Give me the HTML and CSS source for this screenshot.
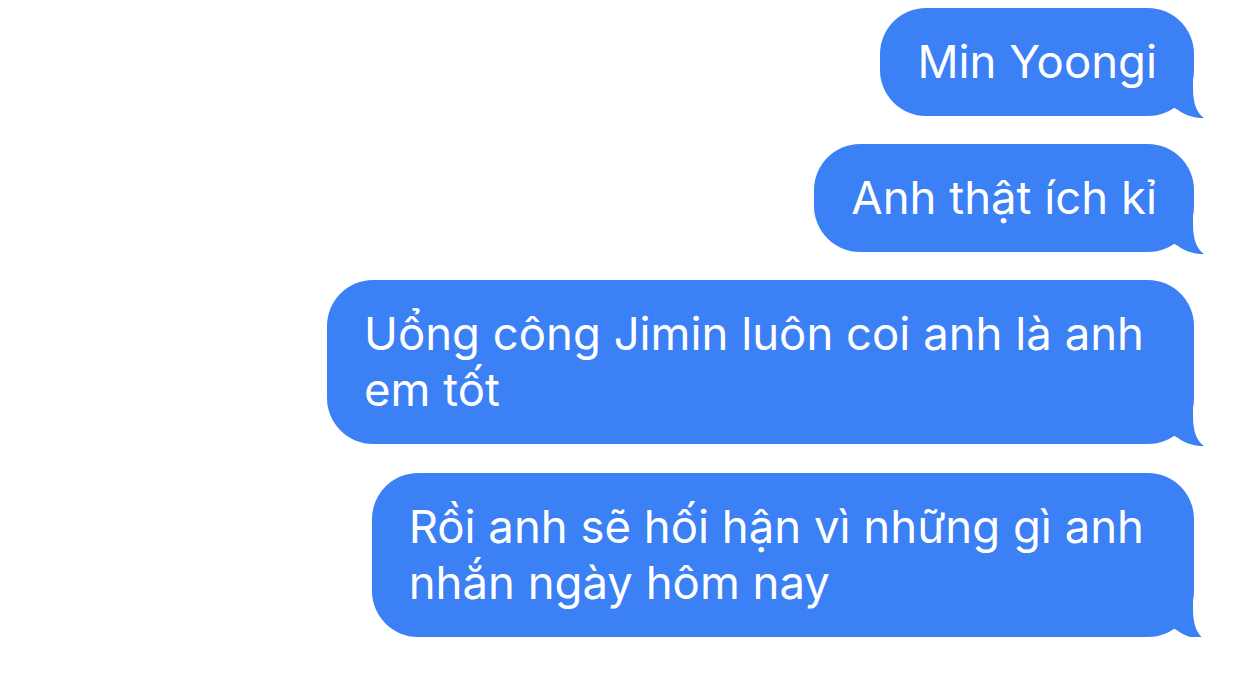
FILE: index.html
```html
<!DOCTYPE html>
<html lang="vi">
<head>
<meta charset="utf-8">
<title>Messages</title>
<link rel="stylesheet" href="styles.css">
</head>
<body>
<div class="thread">
  <div class="bubble">Min Yoongi<svg class="tail" viewBox="0 0 62 52" aria-hidden="true"><path d="M20 10 H50 V22 C50 38 54 47 61 52 C52 52 45 50 38 46 C34 43 30 41 27 40 L20 30 Z"/></svg></div>
  <div class="bubble">Anh thật ích kỉ<svg class="tail" viewBox="0 0 62 52" aria-hidden="true"><path d="M20 10 H50 V22 C50 38 54 47 61 52 C52 52 45 50 38 46 C34 43 30 41 27 40 L20 30 Z"/></svg></div>
  <div class="bubble multi">Uổng công Jimin luôn coi anh là anh<br>em tốt<svg class="tail" viewBox="0 0 62 52" aria-hidden="true"><path d="M20 10 H50 V22 C50 38 54 47 61 52 C52 52 45 50 38 46 C34 43 30 41 27 40 L20 30 Z"/></svg></div>
  <div class="bubble multi">Rồi anh sẽ hối hận vì những gì anh<br>nhắn ngày hôm nay<svg class="tail" viewBox="0 0 62 52" aria-hidden="true"><path d="M20 10 H50 V22 C50 38 54 47 61 52 C52 52 45 50 38 46 C34 43 30 41 27 40 L20 30 Z"/></svg></div>
</div>
</body>
</html>
```
FILE: styles.css
```css
html, body {
  margin: 0;
  background: #ffffff;
}
.thread {
  display: flex;
  flex-direction: column;
  align-items: flex-end;
  gap: 28px;
  padding: 8px 48px 0 0;
  font-family: Inter, "Noto Sans", "DejaVu Sans", sans-serif;
}
.bubble {
  position: relative;
  background: #3b80f4;
  color: #ffffff;
  font-size: 45.5px;
  line-height: 56px;
  padding: 26px 37px 26px 37px;
  border-radius: 46px;
}
.bubble.multi {
  padding-right: 50px;
}
.bubble.multi + .bubble.multi {
  margin-top: 1px;
}
.tail {
  position: absolute;
  right: -11px;
  bottom: -2px;
  width: 62px;
  height: 52px;
  fill: #3b80f4;
}
```
